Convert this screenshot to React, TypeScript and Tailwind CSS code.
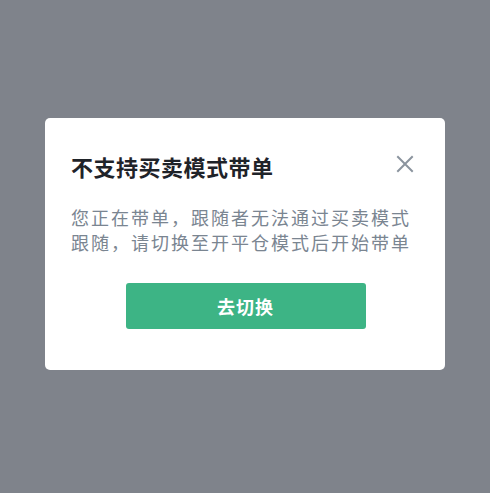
const cjk = "font-['Noto_Sans_CJK_SC','Noto_Sans',sans-serif]";

const CloseIcon = () => (
  <svg width="18" height="18" viewBox="0 0 18 18" fill="none" className="text-[#8b949e]">
    <path d="M2 2L16 16M16 2L2 16" stroke="currentColor" strokeWidth="2" strokeLinecap="square" />
  </svg>
);

const App = () => {
  return (
    <div className={`min-h-screen w-full bg-[#7f838b] flex justify-center pt-[118px] ${cjk}`}>
      <div className="w-[400px] h-[252px] bg-white rounded-[5px] pt-[33px] pl-[26px] pr-[31px] pb-10 flex flex-col">
        {/* header */}
        <div className="flex items-center justify-between">
          <h2 className="text-[22px] leading-[30px] font-bold text-[#1f2329] tracking-[0.5px]">
            不支持买卖模式带单
          </h2>
          <button className="w-[18px] h-[18px] -mt-[4px]">
            <CloseIcon />
          </button>
        </div>

        <p className="mt-6 text-[18px] leading-[25px] tracking-[2px] text-[#7a8591]">
          您正在带单，跟随者无法通过买卖模式
          <br />
          跟随，请切换至开平仓模式后开始带单
        </p>

        <div className="mt-7 flex justify-center pr-[-5px]">
          <button className="ml-[6px] w-[240px] h-[46px] rounded-[3px] bg-[#3db485] text-white text-[18px] font-semibold tracking-[1px]">
            去切换
          </button>
        </div>
      </div>
    </div>
  );
};

export default App;
